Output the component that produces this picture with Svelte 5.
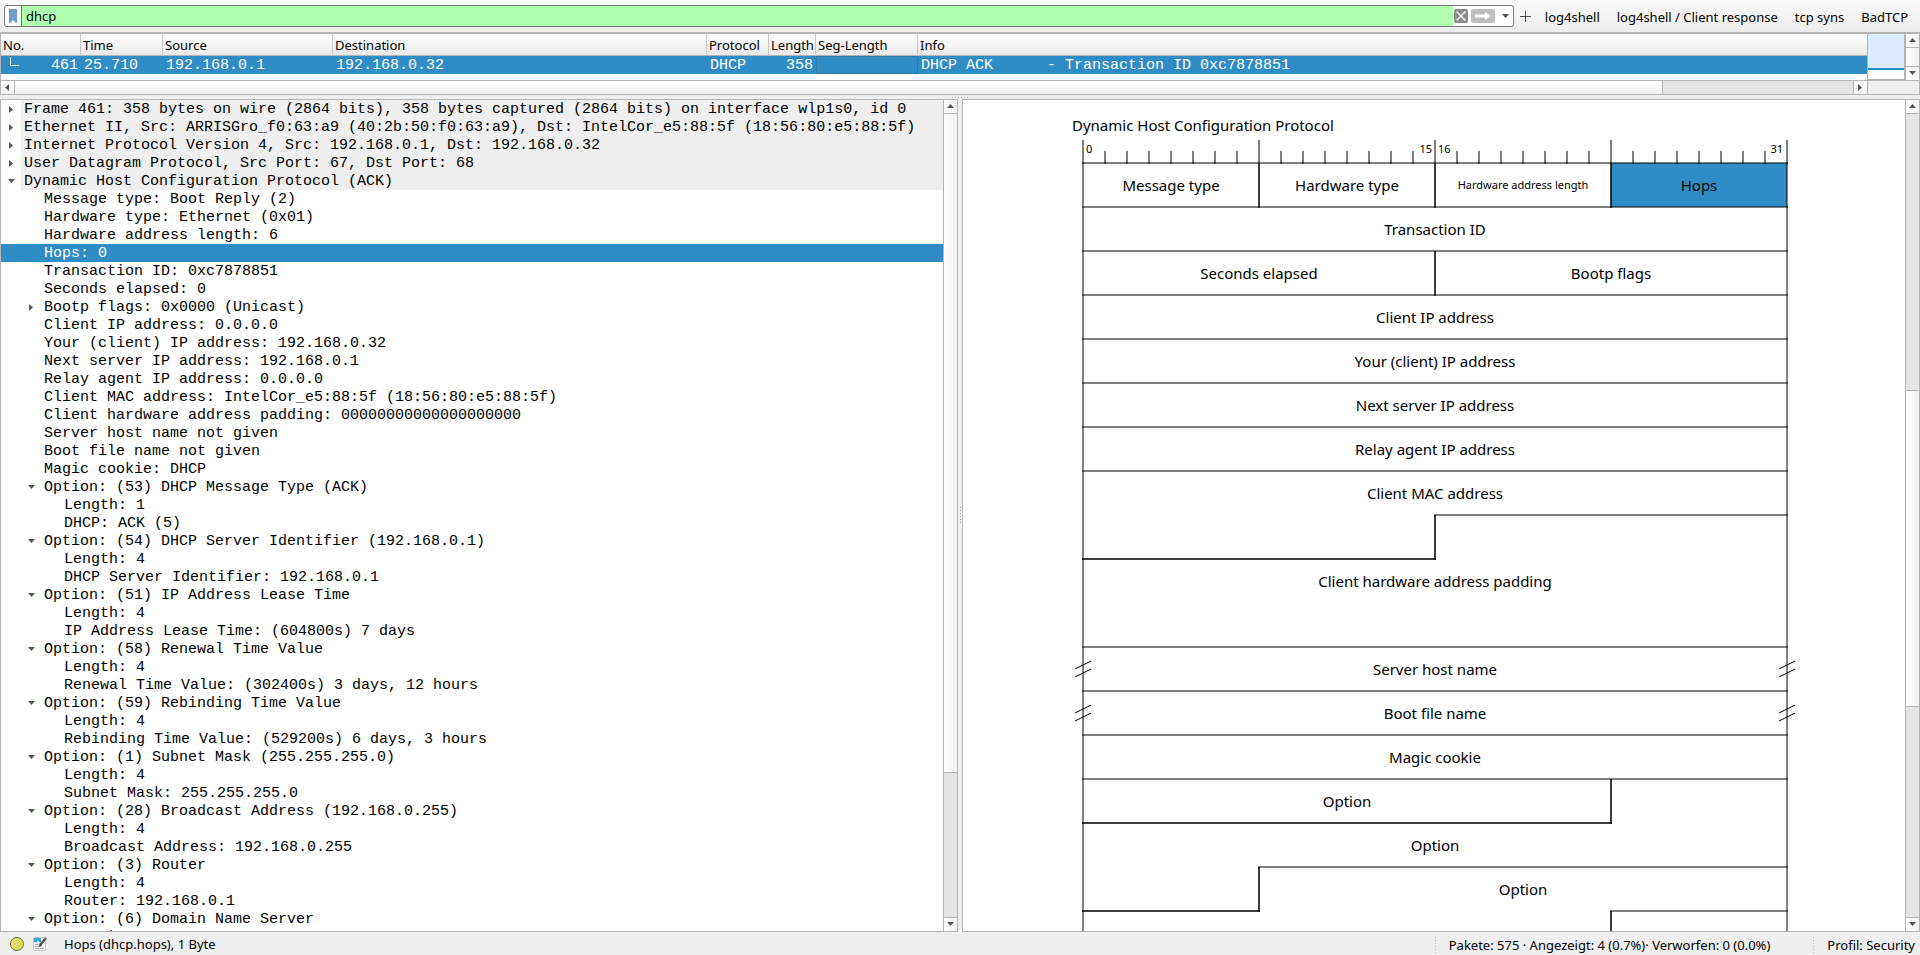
<script>
  const tabs = ['log4shell', 'log4shell / Client response', 'tcp syns', 'BadTCP'];

  // [depth, text, state] where state is 'open', 'closed' or undefined for leaves
  const tree = [
    [0, 'Frame 461: 358 bytes on wire (2864 bits), 358 bytes captured (2864 bits) on interface wlp1s0, id 0', 'closed'],
    [0, 'Ethernet II, Src: ARRISGro_f0:63:a9 (40:2b:50:f0:63:a9), Dst: IntelCor_e5:88:5f (18:56:80:e5:88:5f)', 'closed'],
    [0, 'Internet Protocol Version 4, Src: 192.168.0.1, Dst: 192.168.0.32', 'closed'],
    [0, 'User Datagram Protocol, Src Port: 67, Dst Port: 68', 'closed'],
    [0, 'Dynamic Host Configuration Protocol (ACK)', 'open'],
    [1, 'Message type: Boot Reply (2)'],
    [1, 'Hardware type: Ethernet (0x01)'],
    [1, 'Hardware address length: 6'],
    [1, 'Hops: 0'],
    [1, 'Transaction ID: 0xc7878851'],
    [1, 'Seconds elapsed: 0'],
    [1, 'Bootp flags: 0x0000 (Unicast)', 'closed'],
    [1, 'Client IP address: 0.0.0.0'],
    [1, 'Your (client) IP address: 192.168.0.32'],
    [1, 'Next server IP address: 192.168.0.1'],
    [1, 'Relay agent IP address: 0.0.0.0'],
    [1, 'Client MAC address: IntelCor_e5:88:5f (18:56:80:e5:88:5f)'],
    [1, 'Client hardware address padding: 00000000000000000000'],
    [1, 'Server host name not given'],
    [1, 'Boot file name not given'],
    [1, 'Magic cookie: DHCP'],
    [1, 'Option: (53) DHCP Message Type (ACK)', 'open'],
    [2, 'Length: 1'],
    [2, 'DHCP: ACK (5)'],
    [1, 'Option: (54) DHCP Server Identifier (192.168.0.1)', 'open'],
    [2, 'Length: 4'],
    [2, 'DHCP Server Identifier: 192.168.0.1'],
    [1, 'Option: (51) IP Address Lease Time', 'open'],
    [2, 'Length: 4'],
    [2, 'IP Address Lease Time: (604800s) 7 days'],
    [1, 'Option: (58) Renewal Time Value', 'open'],
    [2, 'Length: 4'],
    [2, 'Renewal Time Value: (302400s) 3 days, 12 hours'],
    [1, 'Option: (59) Rebinding Time Value', 'open'],
    [2, 'Length: 4'],
    [2, 'Rebinding Time Value: (529200s) 6 days, 3 hours'],
    [1, 'Option: (1) Subnet Mask (255.255.255.0)', 'open'],
    [2, 'Length: 4'],
    [2, 'Subnet Mask: 255.255.255.0'],
    [1, 'Option: (28) Broadcast Address (192.168.0.255)', 'open'],
    [2, 'Length: 4'],
    [2, 'Broadcast Address: 192.168.0.255'],
    [1, 'Option: (3) Router', 'open'],
    [2, 'Length: 4'],
    [2, 'Router: 192.168.0.1'],
    [1, 'Option: (6) Domain Name Server', 'open'],
    [2, 'Length: 4']
  ];
  const selected = 8;

  // Packet diagram: 32 bits of 22 units across, rows of 44 units
  const L = 11;
  const TOP = 63;
  const BIT = 22;
  const ROW = 44;
  const R = L + 32 * BIT;
  const x = (bit) => L + bit * BIT;
  const y = (row) => TOP + row * ROW;
  const bits = Array.from({ length: 33 }, (_, i) => i);

  // [row, first bit, last bit]
  const rules = [
    [0, 0, 32], [1, 0, 32], [2, 0, 32], [3, 0, 32], [4, 0, 32], [5, 0, 32], [6, 0, 32],
    [7, 0, 32], [8, 16, 32], [9, 0, 16], [9, 0, 16], [11, 0, 32], [12, 0, 32], [13, 0, 32],
    [14, 0, 32], [15, 0, 24], [15, 0, 24], [16, 8, 32], [17, 0, 8], [17, 0, 8], [17, 24, 32]
  ];
  // [bit, row]
  const walls = [[8, 0], [16, 0], [24, 0], [16, 2], [16, 8], [24, 14], [8, 16], [24, 17]];
  // [label, centre bit, row]
  const fields = [
    ['Message type', 4, 0], ['Hardware type', 12, 0], ['Hops', 28, 0],
    ['Transaction ID', 16, 1], ['Seconds elapsed', 8, 2], ['Bootp flags', 24, 2],
    ['Client IP address', 16, 3], ['Your (client) IP address', 16, 4],
    ['Next server IP address', 16, 5], ['Relay agent IP address', 16, 6],
    ['Client MAC address', 16, 7], ['Client hardware address padding', 16, 9],
    ['Server host name', 16, 11], ['Boot file name', 16, 12], ['Magic cookie', 16, 13],
    ['Option', 12, 14], ['Option', 16, 15], ['Option', 20, 16]
  ];
  const breaks = [[L, 11], [R, 11], [L, 12], [R, 12]];
  let filter = 'dhcp';
</script>

{#snippet arrow(dir)}
  <svg class="arrow" width="7" height="7" viewBox="0 0 7 7" aria-hidden="true">
    {#if dir === 'up'}<path d="M0 5L3.500 1L7 5z" />
    {:else if dir === 'down'}<path d="M0 1L3.500 5L7 1z" />
    {:else if dir === 'left'}<path d="M5 0L1 3.500L5 7z" />
    {:else}<path d="M1 0L5 3.500L1 7z" />{/if}
  </svg>
{/snippet}

{#snippet vscroll(before, thumb, after)}
  <div class="vscroll">
    <button aria-label="Scroll up">{@render arrow('up')}</button>
    <div class="track">
      {#if before}<div class="trough" style="flex-grow: {before}"></div>{/if}
      <div class="thumb" style="flex-grow: {thumb}"></div>
      {#if after}<div class="trough" style="flex-grow: {after}"></div>{/if}
    </div>
    <button aria-label="Scroll down">{@render arrow('down')}</button>
  </div>
{/snippet}

<div class="window">
  <header class="toolbar">
    <div class="filter">
      <button class="bookmark" aria-label="Manage saved bookmarks">
        <svg width="8" height="14" viewBox="0 0 8 14"><path d="M0 0H8V14H7L4 11L1 14H0z" fill="#729fcf" /></svg>
      </button>
      <input aria-label="Display filter" bind:value={filter} spellcheck="false" />
      <button aria-label="Clear filter">
        <svg width="14" height="14" viewBox="0 0 14 14">
          <rect width="14" height="14" rx="2" fill="#888a85" />
          <path d="M2.500 2.500L11.500 11.500M11.500 2.500L2.500 11.500" stroke="#fff" stroke-width="1.600" />
        </svg>
      </button>
      <button aria-label="Apply filter">
        <svg width="24" height="14" viewBox="0 0 24 14">
          <rect width="24" height="14" rx="2" fill="#bebebe" />
          <path d="M4 5.500H14V3L20 7L14 11V8.500H4z" fill="#fff" />
        </svg>
      </button>
      <button class="history" aria-label="Filter history">
        <svg width="7" height="4" viewBox="0 0 7 4"><path d="M0 0H7L3.500 4z" fill="#4d4d4d" /></svg>
      </button>
    </div>
    <button class="plus" aria-label="Add filter button">
      <svg width="11" height="11" viewBox="0 0 11 11"><path d="M5.500 0V11M0 5.500H11" stroke="#4d4d4d" /></svg>
    </button>
    {#each tabs as tab}<button class="tab">{tab}</button>{/each}
  </header>

  <section class="packets">
    <div class="list">
      <table>
        <colgroup>
          <col class="c-no" /><col class="c-time" /><col class="c-src" /><col class="c-dst" />
          <col class="c-proto" /><col class="c-len" /><col class="c-seg" /><col />
        </colgroup>
        <thead>
          <tr>
            <th>No.</th><th>Time</th><th>Source</th><th>Destination</th>
            <th>Protocol</th><th>Length</th><th>Seg-Length</th><th>Info</th>
          </tr>
        </thead>
        <tbody>
          <tr>
            <td class="no">
              <div>
                <svg width="9" height="17" viewBox="0 0 9 17" aria-hidden="true"><path d="M.5 0V8.500H9" fill="none" stroke="#fff" /></svg>
                461
              </div>
            </td>
            <td>25.710</td><td>192.168.0.1</td><td>192.168.0.32</td><td>DHCP</td>
            <td class="num">358</td><td class="current"></td>
            <td>DHCP ACK      - Transaction ID 0xc7878851</td>
          </tr>
        </tbody>
      </table>
    </div>
    <div class="minimap"><div></div></div>
    {@render vscroll(0, 1, 0)}
    <div class="hscroll">
      <button aria-label="Scroll left">{@render arrow('left')}</button>
      <div class="thumb"></div>
      <div class="trough"></div>
      <button aria-label="Scroll right">{@render arrow('right')}</button>
    </div>
    <div class="corner"></div>
  </section>

  <div class="grip" aria-hidden="true"><i></i></div>

  <main>
    <section class="pane">
      <ul class="tree">
        {#each tree as [depth, text, state], i}
          <li class:proto={depth === 0} class:selected={i === selected} style="--depth: {depth}">
            <span class="toggle">
              {#if state}{@render arrow(state === 'open' ? 'down' : 'right')}{/if}
            </span>
            <span class="label">{text}</span>
          </li>
        {/each}
      </ul>
      {@render vscroll(0, 658, 144)}
    </section>
    <div class="grip side" aria-hidden="true"><i></i></div>
    <section class="pane">
      <div class="diagram">
        <svg width="726" height="840" viewBox="0 0 726 840" role="img" aria-label="Packet diagram">
          <rect x={x(24)} y={y(0)} width={8 * BIT} height={ROW} fill="#308cc6" />
          <g class="rule">
            {#each bits as b}
              <path d="M{x(b)} {b % 8 ? TOP - 12 : TOP - 23}V{TOP + 1}" />
            {/each}
            {#each rules as [r, a, b]}<path d="M{x(a) - 1} {y(r)}H{x(b) + 1}" />{/each}
            {#each walls as [b, r]}
              <path d="M{x(b)} {y(r)}v{ROW + 1}" />
              <path d="M{x(b)} {y(r)}v{ROW + 1}" />
            {/each}
            <path d="M{L} {TOP}V840M{R} {TOP}V840" />
          </g>
          {#each breaks as [bx, r]}
            <path d="M{bx - 8} {y(r) + 22}l16 -8m-16 16l16 -8" stroke="#000" fill="none" />
          {/each}
          <text x="0" y="31">Dynamic Host Configuration Protocol</text>
          <g class="small">
            <text x={L + 3} y="53">0</text>
            <text x={x(16) - 3} y="53" text-anchor="end">15</text>
            <text x={x(16) + 3} y="53">16</text>
            <text x={R - 4} y="53" text-anchor="end">31</text>
            <text x={x(20)} y="89" text-anchor="middle">Hardware address length</text>
          </g>
          {#each fields as [label, c, r]}
            <text x={x(c)} y={y(r) + 28} text-anchor="middle">{label}</text>
          {/each}
        </svg>
      </div>
      {@render vscroll(276, 316, 210)}
    </section>
  </main>

  <footer>
    <button class="expert" aria-label="Expert information"></button>
    <button aria-label="Capture file comment">
      <svg width="14" height="14" viewBox="0 0 14 14">
        <path d="M.5 .5H12.500V13.500H.5z" fill="#f4f4f2" stroke="#c8cac6" />
        <path d="M1 1H8V5H6Q5 2 4 5H1z" fill="#3d9fd6" />
        <path d="M2 7.500H6M2 9.500H5M2 11.500H11" stroke="#b5b7b3" />
        <path d="M13 1L7 8" stroke="#555753" stroke-width="2.600" />
        <path d="M7.500 6.500L5 10.500L9 8.500z" fill="#2e3436" />
      </svg>
    </button>
    <span class="field">Hops (dhcp.hops), 1 Byte</span>
    <span class="counts">Pakete: 575 · Angezeigt: 4 (0.7%)· Verworfen: 0 (0.0%)</span>
    <span class="profile">Profil: Security</span>
  </footer>
</div>

<style>
  :global(body) {
    margin: 0;
  }
  .window {
    --line: #b4b4b4;
    --blue: #308cc6;
    box-sizing: border-box;
    height: 100vh;
    display: flex;
    flex-direction: column;
    overflow: hidden;
    background: #efefef;
    color: #000;
    font: 13px/18px 'Noto Sans', sans-serif;
  }
  button {
    display: flex;
    align-items: center;
    justify-content: center;
    margin: 0;
    padding: 0;
    border: 0;
    background: none;
    color: inherit;
    font: inherit;
  }
  svg {
    display: block;
    flex: none;
  }
  .arrow {
    fill: #555;
  }

  .toolbar {
    display: flex;
    align-items: center;
    flex: none;
    height: 32px;
    padding: 0 12px 0 4px;
    background: linear-gradient(#fafafa, #ededed);
  }
  .filter {
    flex: 1;
    display: flex;
    align-items: center;
    gap: 3px;
    height: 20px;
    border: 1px solid #777;
    border-radius: 3px;
    background: #fff;
    overflow: hidden;
  }
  .bookmark {
    width: 17px;
    height: 20px;
    margin-right: -3px;
    border-right: 1px solid #777;
  }
  input {
    flex: 1;
    min-width: 0;
    height: 20px;
    box-sizing: border-box;
    margin-right: -2px;
    padding: 0 0 0 4px;
    border: 0;
    outline: 0;
    background: #afffaf;
    color: #000;
    font: inherit;
  }
  .history {
    width: 15px;
    height: 20px;
  }
  .plus {
    width: 24px;
    height: 24px;
    margin-right: 7px;
  }
  .tab {
    height: 24px;
    padding-top: 2px;
    margin-left: 17px;
    white-space: nowrap;
  }
  .plus + .tab {
    margin-left: 0;
  }

  .packets {
    display: grid;
    grid-template: 46px 15px / minmax(0, 1fr) 38px 14px;
    flex: none;
    border: 1px solid var(--line);
    border-top-width: 2px;
    border-bottom-width: 0;
  }
  .list {
    overflow: hidden;
    background: #fff;
  }
  table {
    width: 100%;
    table-layout: fixed;
    border-collapse: separate;
    border-spacing: 0;
  }
  .c-no { width: 80px; }
  .c-time { width: 82px; }
  .c-src { width: 170px; }
  .c-dst { width: 374px; }
  .c-proto { width: 62px; }
  .c-len { width: 47px; }
  .c-seg { width: 102px; }
  th {
    box-sizing: border-box;
    height: 22px;
    padding: 1px 0 0 2px;
    border-right: 1px solid #c8c8c8;
    border-bottom: 1px solid var(--line);
    background: linear-gradient(#fff, #e9e9e9);
    font-weight: 400;
    line-height: 18px;
    text-align: left;
    white-space: nowrap;
  }
  th:last-child {
    border-right: 0;
  }
  td {
    box-sizing: border-box;
    height: 18px;
    padding: 1px 3px 0;
    background: var(--blue);
    color: #fff;
    font: 15px/17px 'Liberation Mono', monospace;
    white-space: pre;
  }
  .no div {
    display: flex;
    justify-content: space-between;
    height: 17px;
    padding-left: 6px;
  }
  .no, .num {
    padding-right: 3px;
    text-align: right;
  }
  .current {
    border: 1px solid #2a7bae;
  }
  .minimap {
    box-sizing: border-box;
    border: solid var(--line);
    border-width: 0 1px 1px;
    background: #fff;
  }
  .minimap div {
    height: 34px;
    border-bottom: 2px solid var(--blue);
    background: #daecff;
  }

  .vscroll {
    box-sizing: border-box;
    width: 14px;
    flex: none;
    display: flex;
    flex-direction: column;
    border-left: 1px solid var(--line);
  }
  .vscroll button {
    flex: none;
    height: 13px;
    background: linear-gradient(90deg, #fefefe, #f1f1f1);
  }
  .track {
    flex: 1;
    display: flex;
    flex-direction: column;
    border: solid var(--line);
    border-width: 1px 0;
  }
  .track > * + * {
    border-top: 1px solid var(--line);
  }
  .track > * {
    flex-basis: 0;
  }
  .vscroll .thumb {
    background: linear-gradient(90deg, #fefefe, #f1f1f1);
  }
  .trough {
    background: #e5e5e5;
  }
  .hscroll {
    display: flex;
    border: solid var(--line);
    border-width: 1px 0;
  }
  .hscroll button {
    flex: none;
    width: 13px;
    background: linear-gradient(#fefefe, #f1f1f1);
  }
  .hscroll .thumb {
    flex: 1647;
    border: solid var(--line);
    border-width: 0 1px;
    background: linear-gradient(#fefefe, #f1f1f1);
  }
  .hscroll .trough {
    flex: 190;
    border-right: 1px solid var(--line);
  }
  .corner {
    grid-column: 2 / 4;
    border: solid var(--line);
    border-width: 1px 0 1px 1px;
  }

  .grip {
    display: flex;
    align-items: center;
    justify-content: center;
    flex: none;
    height: 4px;
  }
  .grip i {
    width: 17px;
    height: 1px;
    background: repeating-linear-gradient(90deg, #aaa 0 1px, transparent 1px 3px);
  }
  .grip.side {
    width: 4px;
    height: auto;
  }
  .side i {
    width: 1px;
    height: 17px;
    background: repeating-linear-gradient(#aaa 0 1px, transparent 1px 3px);
  }

  main {
    flex: 1;
    min-height: 0;
    display: flex;
  }
  .pane {
    flex: 1;
    min-width: 0;
    display: flex;
    border: 1px solid var(--line);
    background: #fff;
  }
  .tree {
    flex: 1;
    min-width: 0;
    margin: 0;
    padding: 0;
    overflow: hidden;
    list-style: none;
    font: 15px/17px 'Liberation Mono', monospace;
  }
  .tree li {
    display: flex;
    height: 18px;
    padding-left: calc(var(--depth) * 20px);
    white-space: pre;
  }
  .toggle {
    box-sizing: border-box;
    display: flex;
    align-items: center;
    justify-content: center;
    flex: none;
    width: 20px;
    padding: 1px 0 0 1px;
  }
  .label {
    flex: 1;
    padding: 1px 0 0 3px;
  }
  .proto .label {
    background: #efefef;
  }
  .selected {
    background: var(--blue);
    color: #fff;
  }

  .diagram {
    flex: 1;
    min-width: 0;
    display: flex;
    justify-content: center;
    padding-left: 2px;
    overflow: hidden;
  }
  .diagram text {
    font: 15px 'Noto Sans', sans-serif;
  }
  .diagram .small text {
    font-size: 11px;
  }
  .rule {
    fill: none;
    stroke: #000;
    stroke-opacity: 0.5;
    stroke-width: 2;
  }

  footer {
    display: flex;
    align-items: center;
    flex: none;
    height: 23px;
    padding: 0 5px 0 10px;
    line-height: 22px;
    white-space: nowrap;
  }
  .expert {
    width: 14px;
    height: 14px;
    margin-right: 9px;
    border: 1px solid #6c6c38;
    border-radius: 50%;
    background: linear-gradient(135deg, #e8e87a, #d2d250);
  }
  .field {
    flex: 1;
    padding-left: 17px;
  }
  .counts, .profile {
    padding: 2px 0 0 14px;
    background: repeating-linear-gradient(#bbb 0 1px, transparent 1px 3px) 0 5px / 1px 16px no-repeat;
  }
  .counts {
    padding-right: 43px;
  }
</style>
